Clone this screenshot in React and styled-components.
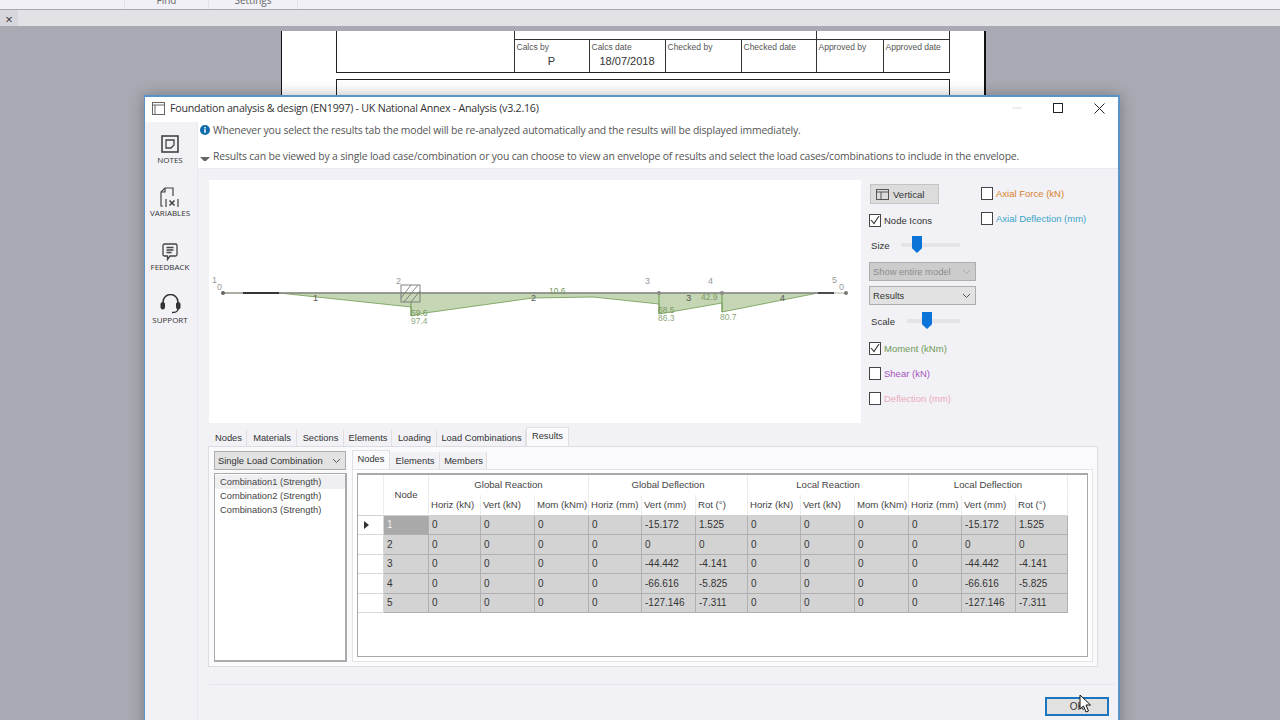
import React from 'react'
import styled, { createGlobalStyle } from 'styled-components'

const UI_FONT = `"Open Sans", "Noto Sans", sans-serif`
const GRID_FONT = `"Liberation Sans", Arial, sans-serif`

const Global = createGlobalStyle`
  html, body { margin: 0; padding: 0; width: 1280px; height: 720px; overflow: hidden; }
  * { box-sizing: border-box; }
`

const Page = styled.div`
  position: relative;
  width: 1280px;
  height: 720px;
  overflow: hidden;
  background: #a9a9b3;
  display: flex;
  flex-direction: column;
  font-family: ${UI_FONT};
`

const Ribbon = styled.div`
  height: 10px;
  background: #f0f0f6;
  border-bottom: 1px solid #a8a8ac;
  display: flex;
  padding-left: 125px;
  overflow: hidden;
`

const RibbonTab = styled.div`
  width: ${p => p.$w}px;
  height: 9px;
  border-right: 1px solid #e2e2e8;
  border-left: 1px solid #e2e2e8;
  margin-left: -1px;
  font-size: 10px;
  line-height: 0px;
  text-align: center;
  color: #666;
`

const DocTabs = styled.div`
  height: 16px;
  background: #e1e1e6;
  display: flex;
`

const DocClose = styled.div`
  width: 18px;
  background: #d6d6dc;
  color: #333;
  font-size: 13px;
  line-height: 18px;
  text-align: center;
`

const Workspace = styled.div`
  flex: 1;
  display: flex;
  justify-content: center;
  padding: 5px 14px 0 0;
  overflow: hidden;
`

const Paper = styled.div`
  width: 705px;
  height: 100%;
  background: #fff;
  border-left: 1px solid #111;
  border-right: 2px solid #111;
  padding: 0 34px 0 54px;
  font-family: ${GRID_FONT};
`

const SignBox = styled.div`
  height: 42px;
  border-left: 1px solid #222;
  border-bottom: 1px solid #222;
  display: flex;
  flex-direction: column;
  padding-left: 177px;
`

const SignTop = styled.div`
  height: 9px;
  display: flex;
  border-bottom: 1px solid #333;
  border-left: 1px solid #333;
  border-right: 1px solid #333;
`

const SignTopCell = styled.div`
  width: 302px;
  border-right: 1px solid #333;
`

const SignRow = styled.div`
  flex: 1;
  display: grid;
  grid-template-columns: 75px 76px 76px 75px 67px 67px;
`

const SignCell = styled.div`
  border-left: 1px solid #333;
  font-size: 8.5px;
  color: #555;
  padding: 2px 2px 0;
  &:last-child { border-right: 1px solid #333; }
`

const SignValue = styled.div`
  font-size: 11px;
  color: #333;
  text-align: center;
  margin-top: 3px;
`

const NextBox = styled.div`
  height: 40px;
  margin-top: 6px;
  border: 1px solid #222;
  border-bottom: 0;
`

const Dialog = styled.div`
  position: absolute;
  left: 144px;
  top: 95px;
  width: 976px;
  height: 640px;
  background: #f1f1f6;
  border: 1px solid #5a93c8;
  border-top-width: 2px;
  border-right-width: 2px;
  box-shadow: 0 0 14px rgba(0, 0, 0, 0.28);
  display: flex;
  flex-direction: column;
`

const TitleBar = styled.div`
  height: 25px;
  padding: 0 0 3px 7px;
  background: #fff;
  display: flex;
  align-items: center;
  flex: none;
`

const Title = styled.div`
  flex: 1;
  margin-left: 5px;
  font-size: 10.7px;
  letter-spacing: -0.26px;
  color: #333;
`

const WinButton = styled.div`
  width: ${p => p.$w}px;
  height: 22px;
  display: flex;
  align-items: center;
  justify-content: center;
`

const Body = styled.div`
  flex: 1;
  display: flex;
`

const Sidebar = styled.div`
  width: 53px;
  border-right: 1px solid #e8e8ee;
  padding: 13px 2px 0 0;
  display: flex;
  flex-direction: column;
`

const SideItem = styled.div`
  height: 53px;
  display: flex;
  flex-direction: column;
  align-items: center;
`

const SideIcon = styled.div`
  height: ${p => p.$h}px;
  margin-top: ${p => p.$top || 0}px;
  display: flex;
  align-items: flex-end;
`

const SideLabel = styled.div`
  font-size: 8px;
  color: #333;
  line-height: 12px;
  margin-top: ${p => p.$mt}px;
`

const Main = styled.div`
  flex: 1;
  min-width: 0;
`

const Notes = styled.div`
  height: 47px;
  background: #fff;
  border-bottom: 1px solid #e9e9ef;
  padding-left: 2px;
  font-size: 10.4px;
  letter-spacing: -0.16px;
  color: #555;
`

const NoteLine = styled.div`
  height: 26px;
  display: flex;
  align-items: center;
  gap: 3px;
  &:first-child { height: 16px; }
  &:last-child { margin-top: 5px; }
`

const NoteArrow = styled.span`
  width: 10px;
  margin-top: 6px;
  height: 0;
  border-left: 4px solid transparent;
  border-right: 4px solid transparent;
  border-top: 4px solid #666;
`

const Content = styled.div`
  padding: 11px 0 0 11px;
`

const TopRow = styled.div`
  display: flex;
  gap: 8px;
`

const Plot = styled.div`
  width: 652px;
  height: 243px;
  background: #fff;
`

const Controls = styled.div`
  display: flex;
  gap: 5px;
  font-family: ${GRID_FONT};
`

const ControlCol = styled.div`
  width: ${p => p.$w}px;
  display: flex;
  flex-direction: column;
`

const ToggleButton = styled.div`
  width: 69px;
  height: 20px;
  margin: 4px 0 0 1px;
  background: #dcdcdc;
  border: 1px solid #c4c4c4;
  display: flex;
  align-items: center;
  gap: 4px;
  padding-left: 5px;
  font-size: 9.6px;
  color: #333;
`

const CheckRow = styled.label`
  display: flex;
  align-items: center;
  gap: 3px;
  height: 14px;
  margin-top: ${p => p.$mt}px;
  font-size: 9.5px;
  color: ${p => p.$color || '#333'};
`

const CheckBox = styled.span`
  width: 12px;
  height: 13px;
  background: #fff;
  border: 1px solid #444;
  display: flex;
  align-items: center;
  justify-content: center;
  flex: none;
`

const SliderRow = styled.div`
  display: flex;
  align-items: center;
  height: 18px;
  margin-top: ${p => p.$mt}px;
  padding-left: 2px;
  font-size: 9.6px;
  color: #333;
`

const SliderLabel = styled.span`
  width: ${p => p.$w}px;
`

const Track = styled.div`
  position: relative;
  flex: 1;
  height: 4px;
  margin-right: 16px;
  background: #e4e4e8;
`

const Thumb = styled.div`
  position: absolute;
  left: ${p => p.$left}px;
  top: -7px;
  width: 10px;
  height: 17px;
  background: #0a74d8;
  clip-path: polygon(0 0, 100% 0, 100% 72%, 50% 100%, 0 72%);
`

const Select = styled.div`
  width: ${p => p.$w}px;
  height: 19px;
  flex: none;
  margin-top: ${p => p.$mt || 0}px;
  background: ${p => (p.$off ? '#cccccc' : '#e2e2e2')};
  border: 1px solid #adadad;
  color: ${p => (p.$off ? '#8d8d8d' : '#333')};
  font-family: ${GRID_FONT};
  font-size: 9.4px;
  display: flex;
  align-items: center;
  justify-content: space-between;
  padding: 0 4px 0 3px;
`

const Tabs = styled.div`
  display: flex;
  margin: 5px 0 0 1px;
  height: 18px;
  align-items: flex-end;
`

const Tab = styled.div`
  width: ${p => p.$w}px;
  height: ${p => (p.$on ? 19 : 17)}px;
  padding-bottom: ${p => (p.$on ? 2 : 0)}px;
  background: ${p => (p.$on ? '#fafafc' : '#f1f1f6')};
  border: 1px solid ${p => (p.$on ? '#e0e0e5' : 'transparent')};
  border-bottom: 0;
  border-right-color: #dedee3;
  font-family: ${GRID_FONT};
  font-size: 9.3px;
  color: #333;
  display: flex;
  align-items: center;
  justify-content: center;
  white-space: nowrap;
`

const TabPanel = styled.div`
  width: 890px;
  height: 221px;
  margin-left: -1px;
  background: #fafafc;
  border: 1px solid #dcdce2;
  display: flex;
  padding: 4px 4px 4px 5px;
`

const LeftPane = styled.div`
  width: 133px;
  display: flex;
  flex-direction: column;
  gap: 3px;
`

const ListBox = styled.div`
  flex: 1;
  background: #fff;
  border: 1px solid #aaa;
  border-right-width: 2px;
  border-bottom-width: 2px;
  padding: 1px 3px;
  font-family: ${GRID_FONT};
  font-size: 9.3px;
  line-height: 14px;
  color: #444;
`

const ListItem = styled.div`
  margin: 0 -3px;
  padding-left: 5px;
  background: ${p => (p.$on ? '#efeff2' : 'transparent')};
`

const RightPane = styled.div`
  flex: 1;
  margin-left: 5px;
  display: flex;
  flex-direction: column;
`

const SubTabs = styled.div`
  display: flex;
  height: 19px;
  margin-top: -1px;
  align-items: flex-end;
`

const SubTabBody = styled.div`
  flex: 1;
  background: #fff;
  border: 1px solid #e3e3e8;
  padding: 3px 4px 4px;
`

const GridFrame = styled.div`
  height: 100%;
  background: #fff;
  border: 1px solid #a8a8a8;
  border-top-width: 2px;
  font-family: ${GRID_FONT};
  font-size: 9.6px;
  color: #444;
`

const DataGrid = styled.div`
  display: grid;
  grid-template-columns: 26px 45px 52px 54px 54px 53px 54px 52px 53px 54px 54px 53px 54px 52px;
  grid-template-rows: 20px 20.5px repeat(5, 19.5px);
  width: 710px;
`

const HeadCell = styled.div`
  grid-column: span ${p => p.$span || 1};
  grid-row: span ${p => p.$rows || 1};
  border-right: 1px solid #ececec;
  border-bottom: 1px solid #d0d0d0;
  display: flex;
  align-items: center;
  justify-content: ${p => (p.$left ? 'flex-start' : 'center')};
  padding: ${p => (p.$left ? '0 0 0 2px' : '0')};
  white-space: nowrap;
  overflow: hidden;
  ${p => p.$flat && 'border-bottom-color: transparent;'}
`

const RowHead = styled.div`
  border-right: 1px solid #d8d8d8;
  border-bottom: 1px solid #d8d8d8;
  display: flex;
  align-items: center;
  justify-content: center;
`

const Arrow = styled.span`
  width: 0;
  height: 0;
  margin-right: 9px;
  border-top: 4px solid transparent;
  border-bottom: 4px solid transparent;
  border-left: 5px solid #333;
`

const Cell = styled.div`
  background: ${p => (p.$sel ? '#a9a9a9' : '#d3d3d3')};
  color: ${p => (p.$sel ? '#f2f2f2' : '#333')};
  border-right: 1px solid #b0b0b0;
  border-bottom: 1px solid #b0b0b0;
  display: flex;
  align-items: center;
  padding-left: 3px;
  font-size: 10px;
`

const Footer = styled.div`
  height: 32px;
  margin: 17px 3px 0 0;
  border-top: 1px solid #e6e6ec;
  display: flex;
  justify-content: flex-end;
  padding: 12px 6px 0 0;
`

const OkButton = styled.div`
  position: relative;
  width: 64px;
  height: 19px;
  background: #e1e1e1;
  border: 2px solid #1d76bd;
  font-family: ${GRID_FONT};
  font-size: 10px;
  color: #333;
  display: flex;
  align-items: center;
  justify-content: center;
`

const Pointer = styled.svg`
  position: absolute;
  left: 32px;
  top: -5px;
`

const tabs = [
  ['Nodes', 37], ['Materials', 50], ['Sections', 47], ['Elements', 48],
  ['Loading', 45], ['Load Combinations', 89], ['Results', 43],
]
const subTabs = [['Nodes', 38], ['Elements', 50], ['Members', 47]]
const units = ['Horiz (kN)', 'Vert (kN)', 'Mom (kNm)', 'Horiz (mm)', 'Vert (mm)', 'Rot (°)']
const groups = ['Global Reaction', 'Global Deflection', 'Local Reaction', 'Local Deflection']
const rows = [
  ['-15.172', '1.525'],
  ['0', '0'],
  ['-44.442', '-4.141'],
  ['-66.616', '-5.825'],
  ['-127.146', '-7.311'],
]

const Tick = () => (
  <svg width="10" height="10" viewBox="0 0 10 10">
    <path d="M1 5l3 3.5L9 1" fill="none" stroke="#333" strokeWidth="1.1" />
  </svg>
)

const Chevron = ({ color = '#555' }) => (
  <svg width="9" height="6" viewBox="0 0 9 6">
    <path d="M1 1l3.5 3.5L8 1" fill="none" stroke={color} strokeWidth="1" />
  </svg>
)

const Check = ({ on, color, mt, children }) => (
  <CheckRow $mt={mt} $color={color}>
    <CheckBox>{on ? <Tick /> : null}</CheckBox>
    {children}
  </CheckRow>
)

const NotesIcon = () => (
  <svg width="18" height="18" viewBox="0 0 18 18" fill="none" stroke="#444">
    <rect x="1" y="1" width="16" height="16" strokeWidth="1.6" />
    <path d="M5 5h8v5l-3 3H5z" strokeWidth="1.3" />
  </svg>
)

const VariablesIcon = () => (
  <svg width="20" height="21" viewBox="0 0 20 21" fill="none" stroke="#444" strokeWidth="1.2">
    <path d="M3 19H1V5l4-4h8v8" />
    <path d="M5 1v4H1" />
    <path d="M6 12v8M18 12v8" />
    <path d="M9.5 13.5l5 5M14.5 13.5l-5 5" strokeWidth="1.6" />
  </svg>
)

const FeedbackIcon = () => (
  <svg width="16" height="18" viewBox="0 0 16 18" fill="none" stroke="#444" strokeWidth="1.3">
    <path d="M2.5 1h11A1.5 1.5 0 0 1 15 2.5v9a1.5 1.5 0 0 1-1.500 1.500H8l-2.500 3.500V13H2.500A1.500 1.500 0 0 1 1 11.500v-9A1.500 1.500 0 0 1 2.500 1z" />
    <path d="M4.500 4.500h7M4.500 7h7M4.500 9.500h5" />
  </svg>
)

const SupportIcon = () => (
  <svg width="21" height="20" viewBox="0 0 21 20" fill="none" stroke="#333">
    <path d="M3 10V8a7.500 7.500 0 0 1 15 0v2" strokeWidth="1.500" />
    <rect x="1" y="8.500" width="3.500" height="6.500" rx="1.500" fill="#333" />
    <rect x="16.500" y="8.500" width="3.500" height="6.500" rx="1.500" fill="#333" />
    <path d="M18 15c0 2.500-2 3.500-6 3.500" strokeWidth="1.300" />
  </svg>
)

const chartLabels = [
  [3, 103, 9, '#999', '1'], [8, 110, 9, '#999', '0'], [187, 104, 9, '#999', '2'],
  [104, 121, 9, '#555', '1'], [202, 136, 8.5, '#7a9a62', '59.6'], [202, 144, 8.5, '#8ca67a', '97.4'],
  [322, 121, 9, '#555', '2'], [340, 114, 8.5, '#7a9a62', '10.6'], [436, 104, 9, '#999', '3'],
  [499, 104, 9, '#999', '4'], [623, 103, 9, '#999', '5'], [630, 110, 9, '#999', '0'],
  [477, 121, 9.5, '#555', '3'], [492, 120, 8.5, '#7a9a62', '42.9'], [571, 121, 9, '#555', '4'],
  [449, 133, 8.5, '#7a9a62', '68.5'], [449, 141, 8.5, '#8ca67a', '86.3'], [511, 140, 8.5, '#8ca67a', '80.7'],
]

// beam and moment diagram, coordinates are relative to the plot
const Chart = () => (
  <svg width="652" height="243" viewBox="0 0 652 243">
    <path
      d="M70 113L202 127V136L216 133L324 118L384 117L450 124V134L513 123V132L609 113Z"
      fill="#c5d6b4"
      stroke="#6d9a50"
      strokeWidth="0.8"
    />
    <path d="M14 113H609" stroke="#8a8a8a" strokeWidth="1.400" />
    <path d="M34 113H70M609 113H625" stroke="#111" strokeWidth="1.300" />
    <path d="M14 113H34M625 113H637" stroke="#a9b79c" strokeWidth="1.200" />
    <path d="M450 113V134M513 113V132" stroke="#6d9a50" strokeWidth="1" />
    <g fill="none" stroke="#777" strokeWidth="0.9">
      <rect x="192" y="105" width="19" height="17" />
      <path d="M192 118l10-13M195 122l14-17M202 122l9-11" />
    </g>
    <path d="M202 122V136" stroke="#6d9a50" strokeWidth="1" />
    <circle cx="14" cy="113" r="2" fill="#666" />
    <circle cx="637" cy="113" r="2" fill="#777" />
    <circle cx="450" cy="113" r="2" fill="#888" />
    <circle cx="513" cy="113" r="2" fill="#888" />
    {chartLabels.map(([x, y, size, color, text], i) => (
      <text key={i} x={x} y={y} fontSize={size} fill={color} fontFamily={GRID_FONT}>{text}</text>
    ))}
  </svg>
)

const App = () => (
  <Page>
    <Global />
    <Ribbon>
      <RibbonTab $w={85}>Find</RibbonTab>
      <RibbonTab $w={90}>Settings</RibbonTab>
    </Ribbon>
    <DocTabs>
      <DocClose>×</DocClose>
    </DocTabs>
    <Workspace>
      <Paper>
        <SignBox>
          <SignTop>
            <SignTopCell />
          </SignTop>
          <SignRow>
            <SignCell>Calcs by<SignValue>P</SignValue></SignCell>
            <SignCell>Calcs date<SignValue>18/07/2018</SignValue></SignCell>
            <SignCell>Checked by</SignCell>
            <SignCell>Checked date</SignCell>
            <SignCell>Approved by</SignCell>
            <SignCell>Approved date</SignCell>
          </SignRow>
        </SignBox>
        <NextBox />
      </Paper>
    </Workspace>

    <Dialog>
      <TitleBar>
        <svg width="13" height="13" viewBox="0 0 13 13" fill="none" stroke="#666">
          <rect x="0.500" y="0.500" width="12" height="12" />
          <path d="M0.500 3h12M3 3v9.500" />
        </svg>
        <Title>Foundation analysis &amp; design (EN1997) - UK National Annex - Analysis (v3.2.16)</Title>
        <WinButton $w={36}>
          <svg width="10" height="2" viewBox="0 0 10 2"><path d="M0 1h10" stroke="#ddd" /></svg>
        </WinButton>
        <WinButton $w={46}>
          <svg width="10" height="10" viewBox="0 0 10 10"><rect x="0.500" y="0.500" width="9" height="9" fill="none" stroke="#222" /></svg>
        </WinButton>
        <WinButton $w={37}>
          <svg width="11" height="11" viewBox="0 0 11 11"><path d="M0.500 0.500l10 10M10.500 0.500l-10 10" stroke="#222" /></svg>
        </WinButton>
      </TitleBar>
      <Body>
        <Sidebar>
          <SideItem>
            <SideIcon $h={18}><NotesIcon /></SideIcon>
            <SideLabel $mt={1}>NOTES</SideLabel>
          </SideItem>
          <SideItem>
            <SideIcon $h={21} $top={-1}><VariablesIcon /></SideIcon>
            <SideLabel $mt={-1}>VARIABLES</SideLabel>
          </SideItem>
          <SideItem>
            <SideIcon $h={18} $top={2}><FeedbackIcon /></SideIcon>
            <SideLabel $mt={0}>FEEDBACK</SideLabel>
          </SideItem>
          <SideItem>
            <SideIcon $h={20}><SupportIcon /></SideIcon>
            <SideLabel $mt={0}>SUPPORT</SideLabel>
          </SideItem>
        </Sidebar>
        <Main>
          <Notes>
            <NoteLine>
              <svg width="10" height="10" viewBox="0 0 10 10">
                <circle cx="5" cy="5" r="5" fill="#0f6cab" />
                <path d="M5 4.200v3.600M5 2v1.400" stroke="#fff" strokeWidth="1.500" />
              </svg>
              Whenever you select the results tab the model will be re-analyzed automatically and the results will be displayed immediately.
            </NoteLine>
            <NoteLine>
              <NoteArrow />
              Results can be viewed by a single load case/combination or you can choose to view an envelope of results and select the load cases/combinations to include in the envelope.
            </NoteLine>
          </Notes>
          <Content>
            <TopRow>
              <Plot><Chart /></Plot>
              <Controls>
                <ControlCol $w={107}>
                  <ToggleButton>
                    <svg width="13" height="11" viewBox="0 0 13 11" fill="none" stroke="#555">
                      <rect x="0.500" y="0.500" width="12" height="10" />
                      <path d="M0.500 3h12M5 3v7.500" />
                    </svg>
                    Vertical
                  </ToggleButton>
                  <Check on mt={9}>Node Icons</Check>
                  <SliderRow $mt={9}>
                    <SliderLabel $w={30}>Size</SliderLabel>
                    <Track><Thumb $left={11} /></Track>
                  </SliderRow>
                  <Select $w={107} $off $mt={8}>Show entire model<Chevron color="#aaa" /></Select>
                  <Select $w={107} $mt={5}>Results<Chevron /></Select>
                  <SliderRow $mt={7}>
                    <SliderLabel $w={36}>Scale</SliderLabel>
                    <Track><Thumb $left={15} /></Track>
                  </SliderRow>
                  <Check on mt={11} color="#6f9a55">Moment (kNm)</Check>
                  <Check mt={11} color="#a855c0">Shear (kN)</Check>
                  <Check mt={11} color="#eeaabb">Deflection (mm)</Check>
                </ControlCol>
                <ControlCol $w={130}>
                  <Check mt={6} color="#d9822b">Axial Force (kN)</Check>
                  <Check mt={11} color="#3aa6c8">Axial Deflection (mm)</Check>
                </ControlCol>
              </Controls>
            </TopRow>
            <Tabs>
              {tabs.map(([name, w]) => (
                <Tab key={name} $w={w} $on={name === 'Results'}>{name}</Tab>
              ))}
            </Tabs>
            <TabPanel>
              <LeftPane>
                <Select $w={132}>Single Load Combination<Chevron /></Select>
                <ListBox>
                  <ListItem $on>Combination1 (Strength)</ListItem>
                  <ListItem>Combination2 (Strength)</ListItem>
                  <ListItem>Combination3 (Strength)</ListItem>
                </ListBox>
              </LeftPane>
              <RightPane>
                <SubTabs>
                  {subTabs.map(([name, w], i) => (
                    <Tab key={name} $w={w} $on={i === 0}>{name}</Tab>
                  ))}
                </SubTabs>
                <SubTabBody>
                  <GridFrame>
                    <DataGrid>
                      <HeadCell $rows={2} />
                      <HeadCell $rows={2}>Node</HeadCell>
                      {groups.map(g => (
                        <HeadCell key={g} $span={3} $flat>{g}</HeadCell>
                      ))}
                      {[...units, ...units].map((u, i) => (
                        <HeadCell key={i} $left>{u}</HeadCell>
                      ))}
                      {rows.map(([vert, rot], r) => (
                        <React.Fragment key={r}>
                          <RowHead>{r === 0 ? <Arrow /> : null}</RowHead>
                          <Cell $sel={r === 0}>{r + 1}</Cell>
                          {['0', '0', '0', '0', vert, rot, '0', '0', '0', '0', vert, rot].map((v, c) => (
                            <Cell key={c}>{v}</Cell>
                          ))}
                        </React.Fragment>
                      ))}
                    </DataGrid>
                  </GridFrame>
                </SubTabBody>
              </RightPane>
            </TabPanel>
            <Footer>
              <OkButton>
                OK
                <Pointer width="12" height="19" viewBox="0 0 12 19">
                  <path d="M1 1v14l3.500-3 2.500 6 2.500-1-2.500-6h4.500z" fill="#fff" stroke="#111" strokeWidth="1" />
                </Pointer>
              </OkButton>
            </Footer>
          </Content>
        </Main>
      </Body>
    </Dialog>
  </Page>
)

export default App
